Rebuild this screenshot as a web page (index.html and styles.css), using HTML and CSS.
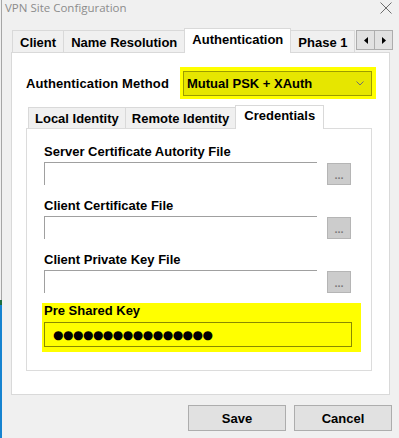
FILE: index.html
```html
<!DOCTYPE html>
<html lang="en">
<head>
  <title>VPN Site Configuration</title>
  <link rel="stylesheet" href="styles.css">
</head>
<body>
  <div class="edge"></div>
  <div class="window">
    <div class="titlebar">
      <span class="title">VPN Site Configuration</span>
      <svg class="close" width="12" height="12" viewBox="0 0 12 12">
        <path d="M0.5 0.5 L11.5 11.5 M11.5 0.5 L0.5 11.5" stroke="#6d6d6d" stroke-width="1" fill="none"/>
      </svg>
    </div>

    <div class="tabs">
      <div class="tab">Client</div>
      <div class="tab">Name Resolution</div>
      <div class="tab active">Authentication</div>
      <div class="tab">Phase 1</div>
      <div class="scroller">
        <div class="arrow"><svg width="4" height="7" viewBox="0 0 4 7"><path d="M4 0 L0 3.5 L4 7 Z" fill="#000"/></svg></div>
        <div class="arrow"><svg width="4" height="7" viewBox="0 0 4 7"><path d="M0 0 L4 3.5 L0 7 Z" fill="#000"/></svg></div>
      </div>
    </div>

    <div class="panel">
      <div class="auth-row">
        <label class="auth-label">Authentication Method</label>
        <div class="highlight">
          <div class="select">
            <span>Mutual PSK + XAuth</span>
            <svg width="8" height="5" viewBox="0 0 8 5"><path d="M0.5 0.5 L4 4 L7.5 0.5" stroke="#6f6f6f" fill="none"/></svg>
          </div>
        </div>
      </div>

      <div class="subtabs">
        <div class="subtab">Local Identity</div>
        <div class="subtab">Remote Identity</div>
        <div class="subtab active">Credentials</div>
      </div>

      <div class="subpanel">
        <div class="field">
          <label>Server Certificate Autority File</label>
          <div class="file-row">
            <div class="file-input"></div>
            <div class="browse">...</div>
          </div>
        </div>
        <div class="field">
          <label>Client Certificate File</label>
          <div class="file-row">
            <div class="file-input"></div>
            <div class="browse">...</div>
          </div>
        </div>
        <div class="field last">
          <label>Client Private Key File</label>
          <div class="file-row">
            <div class="file-input"></div>
            <div class="browse">...</div>
          </div>
        </div>
        <div class="psk">
          <label>Pre Shared Key</label>
          <div class="psk-input"><span class="dots">●●●●●●●●●●●●●●●●</span></div>
        </div>
      </div>
    </div>

    <div class="buttons">
      <button class="btn">Save</button>
      <button class="btn">Cancel</button>
    </div>
  </div>
</body>
</html>
```

FILE: styles.css
```css
* {
  box-sizing: border-box;
}
body {
  margin: 0;
  width: 399px;
  height: 438px;
  display: flex;
  overflow: hidden;
  background-color: #f0f0f0;
  font-family: "Liberation Sans", Arial, sans-serif;
  font-size: 13px;
  font-weight: bold;
  color: #000;
}
label {
  display: block;
}
/* borda esquerda da janela, com a area de trabalho azul embaixo */
.edge {
  width: 2px;
  background:
    linear-gradient(transparent 0 300px, #1d6e3e 300px 305px, #1683d0 305px),
    linear-gradient(90deg, #f0f0f0 0 1px, #a6a6a6 1px);
}
.window {
  flex: 1;
  display: flex;
  flex-direction: column;
}
.titlebar {
  height: 28px;
  display: flex;
  justify-content: space-between;
  align-items: flex-start;
  padding: 0 7px 0 3px;
}
.title {
  font-family: "Open Sans", sans-serif;
  font-weight: normal;
  font-size: 11.5px;
  line-height: 15px;
  color: #8c8c8c;
}
.close {
  margin-top: 2px;
}

/* abas principais */
.tabs {
  display: flex;
  align-items: flex-end;
  margin-left: 10px;
  height: 24px;
  position: relative;
  z-index: 1;
}
.tab {
  height: 22px;
  line-height: 23px;
  padding: 0 7px;
  border: 1px solid #d9d9d9;
  border-bottom: none;
  margin-right: -1px;
  background-color: #f0f0f0;
}
.tab.active {
  height: 25px;
  margin-bottom: -1px;
  line-height: 22px;
  background-color: #fff;
  position: relative;
  z-index: 2;
}
.scroller {
  display: flex;
  align-self: flex-start;
  margin-top: 2px;
  margin-left: 2px;
}
.arrow {
  width: 19px;
  height: 20px;
  border: 1px solid #adadad;
  background-color: #e1e1e1;
  margin-right: -1px;
  display: flex;
  justify-content: center;
  align-items: center;
}
.panel {
  height: 343px;
  margin: 0 9px 0 9px;
  padding: 14px 0 0 14px;
  background-color: #fff;
  border: 1px solid #d9d9d9;
}

.auth-row {
  display: flex;
  align-items: center;
}
.auth-label {
  width: 154px;
  letter-spacing: 0.1px;
}
.highlight {
  width: 196px;
  height: 32px;
  padding: 4px 4px 3px 3px;
  background-color: #ffff00;
}
.select {
  height: 100%;
  display: flex;
  justify-content: space-between;
  align-items: center;
  padding: 0 7px 0 3px;
  border: 1px solid #9c9c00;
  background-color: #e6e600;
}

/* abas internas */
.subtabs {
  display: flex;
  align-items: flex-end;
  margin: 6px 0 0 2px;
  height: 23px;
  position: relative;
  z-index: 1;
}
.subtab {
  height: 21px;
  line-height: 22px;
  padding: 0 6px;
  border: 1px solid #d9d9d9;
  border-bottom: none;
  margin-right: -1px;
  background-color: #f0f0f0;
}
.subtab.active {
  height: 24px;
  margin-bottom: -1px;
  line-height: 20px;
  padding: 0 8px;
  background-color: #fff;
}
.subpanel {
  width: 346px;
  height: 243px;
  padding: 15px 0 0 17px;
  border: 1px solid #dcdcdc;
  background-color: #fff;
}
.field {
  margin-bottom: 13px;
}
.field.last {
  margin-bottom: 10px;
}
.field label {
  line-height: 16px;
  margin-bottom: 2px;
}
.file-row {
  display: flex;
  align-items: flex-start;
}
.file-input {
  width: 273px;
  height: 23px;
  border-top: 1px solid #a0a0a0;
  border-left: 1px solid #a0a0a0;
}
.browse {
  width: 24px;
  height: 22px;
  margin: 1px 0 0 10px;
  border: 1px solid #b5b5b5;
  background-color: #cccccc;
  color: #7a7a7a;
  font-size: 11px;
  line-height: 22px;
  text-align: center;
}
.psk {
  width: 319px;
  height: 49px;
  margin-left: -2px;
  padding: 0 0 0 2px;
  background-color: #ffff00;
}
.psk label {
  line-height: 16px;
  margin-bottom: 3px;
}
.psk-input {
  width: 308px;
  height: 25px;
  border: 1px solid #8a8a00;
  padding-left: 8px;
  display: flex;
  align-items: center;
}
.dots {
  font-family: "DejaVu Sans", sans-serif;
  font-size: 12px;
  letter-spacing: -0.5px;
}

.buttons {
  display: flex;
  justify-content: flex-end;
  gap: 8px;
  margin-top: 10px;
  padding-right: 7px;
}
.btn {
  width: 98px;
  height: 26px;
  font-family: "Liberation Sans", Arial, sans-serif;
  font-size: 13px;
  font-weight: bold;
  border: 1px solid #adadad;
  background-color: #e1e1e1;
  color: #000;
  padding: 0;
}
```
